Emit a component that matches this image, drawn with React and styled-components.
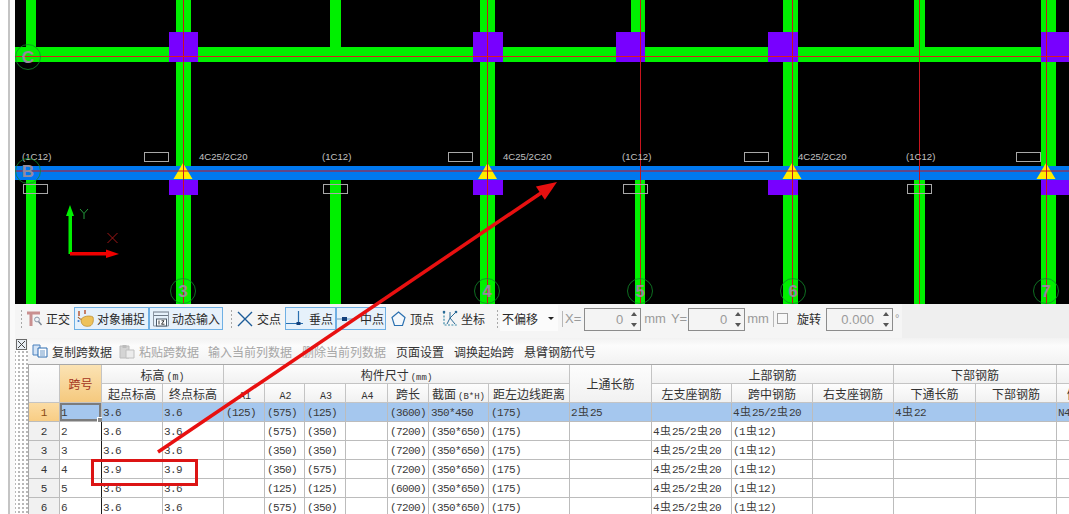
import React from "react";
import styled, { createGlobalStyle } from "styled-components";

const GlobalStyle = createGlobalStyle`
  html, body { margin: 0; padding: 0; background: #fff; overflow: hidden; }
  * { box-sizing: border-box; }
`;

const cjk = `"Noto Sans CJK SC", "Liberation Sans", sans-serif`;
const mono = `"Liberation Mono", "Noto Sans CJK SC", monospace`;

const Page = styled.div`
  position: relative;
  display: flex;
  width: 1069px;
  height: 514px;
  overflow: hidden;
  font-family: ${cjk};
  font-size: 12px;
  color: #2a2a2a;
`;

const Rail = styled.div`
  flex: 0 0 15px;
  border-left: 8px solid #fff;
  background: linear-gradient(90deg, #c4c4c4 0 2px, #fafafa 2px);
`;

const Main = styled.div`
  flex: 1;
  min-width: 0;
  display: flex;
  flex-direction: column;
`;

const Canvas = styled.svg`
  display: block;
  flex: 0 0 304px;
  width: 1054px;
  height: 304px;
  background: #000;
`;

const Toolbar = styled.div`
  flex: 0 0 34px;
  display: flex;
  align-items: flex-start;
  padding: 3px 0 0 5px;
  background: linear-gradient(90deg, #f5f5f5 0 887px, #efefef 887px);
`;

const Grip = styled.span`
  flex: 0 0 3px;
  height: 20px;
  margin: 2px ${(p) => p.$after || 3}px 0 ${(p) => p.$before || 0}px;
  background: radial-gradient(circle, #a8a8a8 1px, transparent 1px) 0 0 / 3px 4px;
`;

const ToolItem = styled.div`
  flex: 0 0 ${(p) => p.$w}px;
  display: flex;
  align-items: center;
  gap: ${(p) => p.$gap || 4}px;
  height: 23px;
  padding-left: ${(p) => p.$pad || 0}px;
  white-space: nowrap;
  border: 1px solid ${(p) => (p.$on ? "#6fb0e4" : "transparent")};
  background: ${(p) => (p.$on ? "#e6f1fb" : "transparent")};
`;

const Select = styled.div`
  flex: 0 0 58px;
  display: flex;
  align-items: center;
  justify-content: space-between;
  height: 26px;
  margin: -2px 4px 0 0;
  padding: 0 4px 0 2px;
  background: #fbfbfb;
`;

const Caret = styled.span`
  width: 0;
  height: 0;
  border: 3px solid transparent;
  border-top: 3px solid #222;
  border-bottom: 0;
`;

const Divider = styled.span`
  flex: 0 0 1px;
  height: 16px;
  margin: 4px 2px 0 0;
  background: #b8b8b8;
`;

const FieldLabel = styled.span`
  flex: none;
  height: 23px;
  line-height: 23px;
  margin: ${(p) => p.$m || "0 3px 0 0"};
  color: ${(p) => p.$color || "#9a9a9a"};
  font-family: ${(p) => (p.$cjk ? cjk : `"Liberation Sans", sans-serif`)};
  font-size: ${(p) => p.$size || 13}px;
`;

const Spin = styled.div`
  position: relative;
  flex: 0 0 ${(p) => p.$w}px;
  height: 23px;
  margin-top: 1px;
  padding-right: ${(p) => p.$inset || 17}px;
  border: 1px solid #8c8c8c;
  background: #f4f4f4;
  color: #9a9a9a;
  font-family: "Liberation Sans", sans-serif;
  font-size: 13px;
  line-height: 21px;
  text-align: right;
  &::before, &::after {
    content: "";
    position: absolute;
    right: 3px;
    width: 0;
    height: 0;
    border: 3px solid transparent;
  }
  &::before { top: 3px; border-top: 0; border-bottom: 4px solid #555; }
  &::after { bottom: 3px; border-bottom: 0; border-top: 4px solid #555; }
`;

const Check = styled.span`
  flex: 0 0 11px;
  height: 11px;
  margin: 6px 9px 0 1px;
  border: 1px solid #a0a0a0;
  background: #f8f8f8;
`;

const Lower = styled.div`
  flex: 1;
  min-height: 0;
  display: flex;
`;

const DotStrip = styled.div`
  flex: 0 0 13px;
  position: relative;
  background:
    linear-gradient(#f3f3f3, #f3f3f3) 0 0 / 100% 12px no-repeat,
    radial-gradient(circle, #b8b8b8 0.9px, transparent 1.1px) 2px 0 / 4px 4px repeat;
`;

const CornerIcon = styled.svg`
  position: absolute;
  top: 1px;
  left: 1px;
`;

const Content = styled.div`
  flex: 1;
  min-width: 0;
  display: flex;
  flex-direction: column;
`;

const ActionBar = styled.div`
  flex: 0 0 26px;
  display: flex;
  align-items: center;
  gap: 10px;
  padding-left: 4px;
  background: linear-gradient(#f2f2f2, #fcfcfc 30%, #f2f2f2);
  white-space: nowrap;
`;

const Action = styled.span`
  display: flex;
  align-items: center;
  gap: 4px;
  margin-left: ${(p) => p.$nudge || 0}px;
  color: ${(p) => (p.$off ? "#a6a6a6" : "#333")};
`;

const TableWrap = styled.div`
  flex: 1;
  min-height: 0;
  overflow: hidden;
  border-top: 1px solid #a8a8a8;
  border-left: 1px solid #a8a8a8;
`;

const Sheet = styled.table`
  table-layout: fixed;
  width: 1109px;
  border-collapse: separate;
  border-spacing: 0;
`;

const Head = styled.th`
  height: ${(p) => p.$h || 19}px;
  padding: 0;
  overflow: hidden;
  white-space: nowrap;
  border-right: 1px solid #c4c4c4;
  border-bottom: 1px solid #c4c4c4;
  background: ${(p) =>
    p.$accent ? "linear-gradient(#fbe3b4, #f5c97e)" : "linear-gradient(#fdfdfd, #f1f1f1)"};
  color: ${(p) => (p.$accent ? "#a3341e" : "#333")};
  font-family: ${cjk};
  font-size: 12px;
  font-weight: 400;
  text-align: center;
`;

const Small = styled.span`
  margin-left: 2px;
  font-family: ${mono};
  font-size: ${(p) => p.$size || 9}px;
`;

const RowHead = styled.td`
  height: 19px;
  padding: 2px 0 0;
  border-right: 1px solid #bcbcbc;
  border-bottom: 1px solid #bcbcbc;
  background: ${(p) => (p.$active ? "linear-gradient(#fbdca4, #f8cd84)" : "#f1f1f1")};
  color: ${(p) => (p.$active ? "#8a4a10" : "#333")};
  font-family: ${mono};
  font-size: 11px;
  line-height: 14px;
  text-align: center;
`;

const Cell = styled.td`
  position: relative;
  height: 19px;
  padding: 2px 0 0 ${(p) => p.$pad}px;
  overflow: ${(p) => (p.$current ? "visible" : "hidden")};
  white-space: nowrap;
  border-right: 1px solid ${(p) => (p.$frozen ? "#1c1c1c" : "#bcbcbc")};
  border-bottom: 1px solid #bcbcbc;
  background: ${(p) => (p.$active ? "#a5c7ee" : "#fff")};
  box-shadow: ${(p) => (p.$current ? "inset 0 0 0 2px #7c7c7c" : "none")};
  color: #3a3a3a;
  font-family: ${mono};
  font-size: 11px;
  line-height: 14px;
  letter-spacing: -0.6px;
  &::after {
    content: ${(p) => (p.$current ? '""' : "none")};
    position: absolute;
    right: -3px;
    bottom: -3px;
    width: 5px;
    height: 5px;
    background: #8a8a8a;
    border: 1px solid #fff;
  }
`;

const BarSign = styled.span`
  margin: 0 1px;
  font-family: ${cjk};
  font-size: 11px;
  line-height: 0;
  letter-spacing: 0;
`;

const Overlay = styled.svg`
  position: absolute;
  top: 0;
  left: 0;
  pointer-events: none;
`;

const LabelText = styled.text`
  fill: #c2c2c2;
  font-family: "Liberation Sans", sans-serif;
  font-size: 9.6px;
`;

const AxisText = styled.text`
  fill: #958a9c;
  font-family: "Liberation Sans", sans-serif;
  font-size: 17px;
  font-weight: 700;
  text-anchor: middle;
`;

const GREEN = "#00f000";
const PURPLE = "#7800ff";
const BLUE = "#0078f0";

const topBeams = [[26, 36], [176, 191], [330, 341], [480, 495], [631, 645], [783, 798], [914, 925], [1041, 1056]];
const midBeams = [[176, 191], [480, 495], [783, 798], [1041, 1056]];
const lowBeams = [[26, 36], [176, 191], [330, 341], [480, 495], [635, 645], [783, 798], [914, 925], [1041, 1056]];
const upperCols = [[169, 198], [473, 503], [616, 645], [768, 798], [1041, 1069]];
const lowerCols = [[169, 198], [473, 503], [768, 798], [1041, 1069]];
const redLines = [183, 487, 640, 792, 919, 1046];
const triangles = [183, 487.5, 792, 1046];
const axisMarks = [
  [28, 57, "C"], [28, 171, "B"], [183, 291, "3"], [487, 291, "4"],
  [640, 291, "5"], [793, 291, "6"], [1046, 291, "7"],
];
const upperBoxes = [144, 448, 744, 1016];
const lowerBoxes = [23, 323, 623, 907];
const spanLabels = [22, 322, 622, 906];
const supportLabels = [199, 503, 798];

const PlanView = () => (
  <Canvas viewBox="15 0 1054 304">
    {topBeams.map(([a, b]) => <rect key={a} x={a} y={0} width={b - a} height={50} fill={GREEN} />)}
    {midBeams.map(([a, b]) => <rect key={a} x={a} y={60} width={b - a} height={110} fill={GREEN} />)}
    {lowBeams.map(([a, b]) => <rect key={a} x={a} y={178} width={b - a} height={126} fill={GREEN} />)}
    <rect x={15} y={47} width={1054} height={15} fill={GREEN} />
    {upperCols.map(([a, b]) => <rect key={a} x={a} y={32} width={b - a} height={30} fill={PURPLE} />)}
    {lowerCols.map(([a, b]) => <rect key={a} x={a} y={180} width={b - a} height={15} fill={PURPLE} />)}
    <rect x={15} y={166} width={1054} height={14} fill={BLUE} />
    {triangles.map((x) => <polygon key={x} points={`${x},163 ${x + 9.5},179 ${x - 9.5},179`} fill="#ffee00" />)}
    {redLines.map((x) => <line key={x} x1={x + 0.5} y1={0} x2={x + 0.5} y2={304} stroke="#c8141e" />)}
    <line x1={15} y1={56.5} x2={1069} y2={56.5} stroke="#d81e1e" />
    <line x1={15} y1={171} x2={1069} y2={171} stroke="#c8141e" />
    {upperBoxes.map((x) => <rect key={x} x={x + 0.5} y={152.5} width={24} height={9} fill="none" stroke="#a8a8a8" />)}
    {lowerBoxes.map((x) => <rect key={x} x={x + 0.5} y={184.5} width={24} height={9} fill="none" stroke="#a8a8a8" />)}
    {spanLabels.map((x) => <LabelText key={x} x={x} y={160}>(1C12)</LabelText>)}
    {supportLabels.map((x) => <LabelText key={x} x={x} y={160}>4C25/2C20</LabelText>)}
    {axisMarks.map(([x, y, t]) => (
      <g key={t}>
        <circle cx={x} cy={y} r={12.5} fill="none" stroke="#128a2a" strokeWidth={0.8} />
        <AxisText x={x} y={y + 6}>{t}</AxisText>
      </g>
    ))}
    <rect x={68.5} y={214} width={3.5} height={40} fill={GREEN} />
    <polygon points="70,205 74,216 66,216" fill={GREEN} />
    <path d="M80 209l4 4.5 4-4.5M84 213.5V219" fill="none" stroke="#2cc04a" strokeWidth={0.8} />
    <rect x={70} y={252} width={38} height={3.5} fill="#f00000" />
    <polygon points="119,254 106,249.5 106,258" fill="#f00000" />
    <path d="M107.5 233l10 10M117.5 233l-10 10" fill="none" stroke="#b01818" strokeWidth={0.9} />
  </Canvas>
);

const OrthoIcon = () => (
  <svg width="16" height="18" viewBox="0 0 16 18">
    <path d="M0 3h13M4 3v13" stroke="#c99090" strokeWidth="3" fill="none" />
    <circle cx="10" cy="9.5" r="2.4" fill="#eef2f6" stroke="#8a98a8" />
    <path d="M11.5 11.5l3 3.5" stroke="#7a8694" strokeWidth="1.4" />
  </svg>
);

const SnapIcon = () => (
  <svg width="18" height="19" viewBox="0 0 18 19">
    <path d="M2 2v5M8 1v4" stroke="#b8502a" strokeWidth="1.4" />
    <path d="M1 8c2 3 5 3 8 1" stroke="#9c5a28" strokeWidth="1.2" fill="none" />
    <path d="M4 11c1-4 9-5 12-3 1 3 0 8-3 9-4 1-9 0-9-6z" fill="#eec25a" stroke="#b88a2e" strokeWidth=".7" />
    <circle cx="1.5" cy="12" r="1.1" fill="#3f7fd0" />
  </svg>
);

const DynamicIcon = () => (
  <svg width="18" height="18" viewBox="0 0 18 18">
    <path d="M1 2h16M2 5.5h14" stroke="#6f7b88" fill="none" />
    <path d="M1.5 2v14h15V2" stroke="#8a94a0" fill="none" />
    <rect x="4.5" y="9" width="10" height="7" fill="#fff" stroke="#4a5866" />
    <path d="M7 10.5v4M9.5 10.8h2.5l-2.5 3.4h3" stroke="#222" fill="none" strokeWidth=".9" />
  </svg>
);

const CrossIcon = () => (
  <svg width="16" height="16" viewBox="0 0 16 16">
    <path d="M1 1l14 14M15 1L1 15" stroke="#1d5c99" strokeWidth="1.4" />
  </svg>
);

const PerpIcon = () => (
  <svg width="18" height="18" viewBox="0 0 18 18">
    <path d="M0 13.5h17M12.5 1v12" stroke="#2a70b0" strokeWidth="1.2" fill="none" />
    <rect x="10.5" y="12" width="4" height="3" fill="#12407c" />
  </svg>
);

const MidIcon = () => (
  <svg width="18" height="18" viewBox="0 0 18 18">
    <path d="M0 9h17" stroke="#7fa8cc" strokeWidth="1.2" />
    <rect x="5" y="7" width="5" height="4" fill="#12407c" />
  </svg>
);

const VertexIcon = () => (
  <svg width="15" height="16" viewBox="0 0 15 16">
    <path d="M7.5 1L14 6.5l-2.5 8h-8L1 6.5z" fill="#f4f8fc" stroke="#2a70b0" strokeWidth="1.2" />
  </svg>
);

const CoordIcon = () => (
  <svg width="18" height="18" viewBox="0 0 18 18">
    <path d="M3 2v13h13" stroke="#3a8aa8" strokeWidth="1.2" strokeDasharray="2 1.4" fill="none" />
    <path d="M9 2v6l5-5M9 8l-3 6M9 8l5 6" stroke="#2a6a96" fill="none" />
    <circle cx="3" cy="2" r="1.3" fill="#2a6a96" />
    <circle cx="15" cy="2" r="1.3" fill="#2a6a96" />
  </svg>
);

const CopyIcon = () => (
  <svg width="16" height="14" viewBox="0 0 16 14">
    <path d="M1 1h7v10H1z" fill="#d4e4f6" stroke="#4a80bc" />
    <path d="M6 4h9v9H6z" fill="#fff" stroke="#2d6cb0" />
    <path d="M8 7h5M8 9h5M8 11h5" stroke="#6a98c8" />
  </svg>
);

const PasteIcon = () => (
  <svg width="16" height="15" viewBox="0 0 16 15">
    <path d="M1 2h9v12H1z" fill="#d4d4d4" stroke="#bcbcbc" />
    <path d="M3.5 1h4v3h-4z" fill="#bcbcbc" />
    <path d="M7 6h8v8H7z" fill="#ececec" stroke="#c0c0c0" />
  </svg>
);

const Sign = ({ text }) =>
  text.split("虫").map((part, i) => (
    <React.Fragment key={i}>
      {i > 0 && <BarSign>虫</BarSign>}
      {part}
    </React.Fragment>
  ));

const colWidths = [31, 42, 61, 61, 41, 40, 41, 42, 41, 60, 81, 82, 80, 81, 81, 82, 81, 81];

const mk = (n, start, end, a2, a3, len) => [
  n, start, end, "", a2, a3, "", len, "(350*650)", "(175)", "", "4虫25/2虫20", "(1虫12)", "", "", "", "",
];

const rows = [
  ["1", "3.6", "3.6", "(125)", "(575)", "(125)", "", "(3600)", "350*450", "(175)", "2虫25", "", "4虫25/2虫20", "", "4虫22", "", "N4虫12"],
  mk("2", "3.6", "3.6", "(575)", "(350)", "(7200)"),
  mk("3", "3.6", "3.6", "(350)", "(350)", "(7200)"),
  mk("4", "3.9", "3.9", "(350)", "(575)", "(7200)"),
  mk("5", "3.6", "3.6", "(125)", "(125)", "(6000)"),
  mk("6", "3.6", "3.6", "(575)", "(350)", "(7200)"),
];

const SpanTable = () => (
  <Sheet>
    <colgroup>
      {colWidths.map((w, i) => <col key={i} style={{ width: w }} />)}
    </colgroup>
    <thead>
      <tr>
        <Head rowSpan={2} />
        <Head rowSpan={2} $accent>跨号</Head>
        <Head colSpan={2} $h={19}>标高<Small $size={10}>(m)</Small></Head>
        <Head colSpan={7} $h={19}>构件尺寸<Small>(mm)</Small></Head>
        <Head rowSpan={2}>上通长筋</Head>
        <Head colSpan={3} $h={19}>上部钢筋</Head>
        <Head colSpan={2} $h={19}>下部钢筋</Head>
        <Head />
      </tr>
      <tr>
        <Head>起点标高</Head>
        <Head>终点标高</Head>
        <Head><Small $size={10}>A1</Small></Head>
        <Head><Small $size={10}>A2</Small></Head>
        <Head><Small $size={10}>A3</Small></Head>
        <Head><Small $size={10}>A4</Small></Head>
        <Head>跨长</Head>
        <Head>截面<Small>(B*H)</Small></Head>
        <Head>距左边线距离</Head>
        <Head>左支座钢筋</Head>
        <Head>跨中钢筋</Head>
        <Head>右支座钢筋</Head>
        <Head>下通长筋</Head>
        <Head>下部钢筋</Head>
        <Head>侧面通长筋</Head>
      </tr>
    </thead>
    <tbody>
      {rows.map((row, r) => (
        <tr key={r}>
          <RowHead $active={r === 0}>{r + 1}</RowHead>
          {row.map((value, c) => (
            <Cell
              key={c}
              $pad={c <= 2 || value.includes("虫") ? 1 : 2}
              $active={r === 0}
              $current={r === 0 && c === 0}
              $frozen={r > 0 && c === 0}
            >
              <Sign text={value} />
            </Cell>
          ))}
        </tr>
      ))}
    </tbody>
  </Sheet>
);

const App = () => (
  <Page>
    <GlobalStyle />
    <Rail />
    <Main>
      <PlanView />
      <Toolbar>
        <Grip $after={3} />
        <ToolItem $w={48} $gap={3}><OrthoIcon />正交</ToolItem>
        <ToolItem $w={75} $on $pad={2} $gap={2}><SnapIcon />对象捕捉</ToolItem>
        <ToolItem $w={74} $on $pad={2} $gap={2}><DynamicIcon />动态输入</ToolItem>
        <Grip $before={7} $after={2} />
        <ToolItem $w={50} $pad={1} $gap={4}><CrossIcon />交点</ToolItem>
        <ToolItem $w={51} $on $gap={5}><PerpIcon />垂点</ToolItem>
        <ToolItem $w={50} $on $gap={5}><MidIcon />中点</ToolItem>
        <ToolItem $w={52} $gap={4} $pad={4}><VertexIcon />顶点</ToolItem>
        <ToolItem $w={50} $gap={2} $pad={2}><CoordIcon />坐标</ToolItem>
        <Grip $before={8} $after={1} />
        <Select>不偏移<Caret /></Select>
        <Divider />
        <FieldLabel $m="0 3px 0 0">X=</FieldLabel>
        <Spin $w={57}>0</Spin>
        <FieldLabel $m="0 5px 0 3px">mm</FieldLabel>
        <FieldLabel $m="0 1px 0 0">Y=</FieldLabel>
        <Spin $w={57}>0</Spin>
        <FieldLabel $m="0 4px 0 2px">mm</FieldLabel>
        <Divider />
        <Check />
        <FieldLabel $cjk $size={12} $color="#2a2a2a" $m="0 5px 0 0">旋转</FieldLabel>
        <Spin $w={67} $inset={18}>0.000</Spin>
        <FieldLabel $m="0 0 0 2px" $size={11}>°</FieldLabel>
      </Toolbar>
      <Lower>
        <DotStrip>
          <CornerIcon width="11" height="11" viewBox="0 0 11 11">
            <rect x="0.5" y="0.5" width="10" height="10" fill="#e8eef4" stroke="#6a6a6a" />
            <path d="M2 2l7 7M9 2L2 9" stroke="#444" />
          </CornerIcon>
        </DotStrip>
        <Content>
          <ActionBar>
            <Action><CopyIcon />复制跨数据</Action>
            <Action $off $nudge={-3}><PasteIcon />粘贴跨数据</Action>
            <Action $off $nudge={-1}>输入当前列数据</Action>
            <Action $off>删除当前列数据</Action>
            <Action>页面设置</Action>
            <Action>调换起始跨</Action>
            <Action>悬臂钢筋代号</Action>
          </ActionBar>
          <TableWrap>
            <SpanTable />
          </TableWrap>
        </Content>
      </Lower>
    </Main>
    <Overlay width="1069" height="514" viewBox="0 0 1069 514">
      <line x1="158" y1="452" x2="541" y2="193" stroke="#e81010" strokeWidth="3.5" />
      <polygon points="557,182 535.9,186.6 544.9,199.8" fill="#e81010" />
      <rect x="92.5" y="460.5" width="104" height="24" fill="none" stroke="#dc1414" strokeWidth="3" />
    </Overlay>
  </Page>
);

export default App;
